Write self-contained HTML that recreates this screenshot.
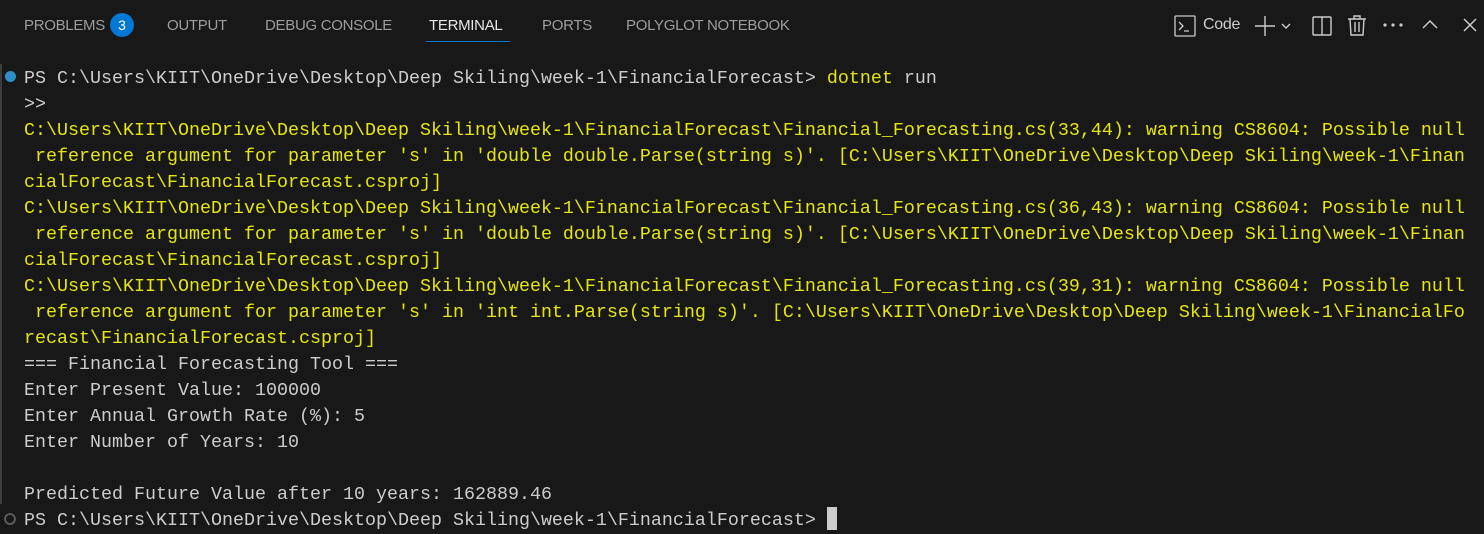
<!DOCTYPE html>
<html><head><style>
*{margin:0;padding:0;box-sizing:border-box}
body{width:1484px;height:534px;background:#181818;overflow:hidden;position:relative;font-family:"Liberation Sans",sans-serif}
.tabs{position:absolute;top:0;left:0;height:52px;width:100%}
.tab{position:absolute;top:17px;font-size:15px;color:#9d9d9d;letter-spacing:-0.3px}
.tab.act{color:#e7e7e7}
.badge{position:absolute;left:110px;top:13px;width:24px;height:24px;border-radius:12px;background:#0078d4;color:#fff;font-size:14px;text-align:center;line-height:24px}
.ul{position:absolute;left:426px;top:41px;width:84px;height:1px;background:#0078d4}
.term{position:absolute;left:24px;top:66px;font-family:"Liberation Mono",monospace;font-size:18.33px;line-height:26px;color:#cccccc;white-space:pre}
.y{color:#e5e510}
.bar{position:absolute;left:0;top:64px;width:2px;height:440px;background:#3c3c3c}
.dot1{position:absolute;left:5px;top:71px;width:11px;height:11px;border-radius:50%;background:#2f8fc9}
.dot2{position:absolute;left:4px;top:513px;width:12px;height:12px;border-radius:50%;border:2px solid #5a5a5a}
.cur{position:absolute;left:827px;top:507px;width:10px;height:23px;background:#cccccc}
svg{position:absolute}
</style></head><body>
<div class="tabs">
<div class="tab" style="left:24px">PROBLEMS</div><div class="badge">3</div>
<div class="tab" style="left:167px">OUTPUT</div>
<div class="tab" style="left:265px">DEBUG CONSOLE</div>
<div class="tab act" style="left:429px">TERMINAL</div>
<div class="ul"></div>
<div class="tab" style="left:542px">PORTS</div>
<div class="tab" style="left:626px">POLYGLOT NOTEBOOK</div>
<svg style="left:1174px;top:15px" width="22" height="22" viewBox="0 0 22 22" fill="none" stroke="#cccccc" stroke-width="1.3"><rect x="1" y="1" width="20" height="20" rx="1"/><path d="M5 7l4 4-4 4M10 16h5"/></svg>
<div class="tab act" style="left:1203px;color:#cccccc;font-size:16px;top:16px">Code</div>
<svg style="left:1254px;top:15px" width="42" height="22" viewBox="0 0 42 22" fill="none" stroke="#cccccc" stroke-width="1.4"><path d="M11 1v20M1 11h20M28 9l4 4 4-4"/></svg>
<svg style="left:1312px;top:15px" width="20" height="22" viewBox="0 0 20 22" fill="none" stroke="#cccccc" stroke-width="1.4"><rect x="1" y="2" width="18" height="18" rx="1"/><path d="M10 2v18"/></svg>
<svg style="left:1347px;top:14px" width="20" height="23" viewBox="0 0 20 23" fill="none" stroke="#cccccc" stroke-width="1.4"><path d="M1 5h18M7 5V2h6v3M3 5l1 16h12l1-16M8 8v10M12 8v10"/></svg>
<svg style="left:1382px;top:22px" width="22" height="6" viewBox="0 0 22 6" fill="#cccccc"><circle cx="3" cy="3" r="1.6"/><circle cx="11" cy="3" r="1.6"/><circle cx="19" cy="3" r="1.6"/></svg>
<svg style="left:1422px;top:18px" width="16" height="12" viewBox="0 0 16 12" fill="none" stroke="#cccccc" stroke-width="1.5"><path d="M1 10l7-7 7 7"/></svg>
<svg style="left:1463px;top:18px" width="14" height="14" viewBox="0 0 14 14" fill="none" stroke="#cccccc" stroke-width="1.5"><path d="M1 1l12 12M13 1L1 13"/></svg>
</div>
<div class="bar"></div><div class="dot1"></div><div class="dot2"></div>
<div class="term">PS C:\Users\KIIT\OneDrive\Desktop\Deep Skiling\week-1\FinancialForecast&gt; <span class="y">dotnet</span> run
&gt;&gt;
<span class="y">C:\Users\KIIT\OneDrive\Desktop\Deep Skiling\week-1\FinancialForecast\Financial_Forecasting.cs(33,44): warning CS8604: Possible null
 reference argument for parameter 's' in 'double double.Parse(string s)'. [C:\Users\KIIT\OneDrive\Desktop\Deep Skiling\week-1\Finan
cialForecast\FinancialForecast.csproj]
C:\Users\KIIT\OneDrive\Desktop\Deep Skiling\week-1\FinancialForecast\Financial_Forecasting.cs(36,43): warning CS8604: Possible null
 reference argument for parameter 's' in 'double double.Parse(string s)'. [C:\Users\KIIT\OneDrive\Desktop\Deep Skiling\week-1\Finan
cialForecast\FinancialForecast.csproj]
C:\Users\KIIT\OneDrive\Desktop\Deep Skiling\week-1\FinancialForecast\Financial_Forecasting.cs(39,31): warning CS8604: Possible null
 reference argument for parameter 's' in 'int int.Parse(string s)'. [C:\Users\KIIT\OneDrive\Desktop\Deep Skiling\week-1\FinancialFo
recast\FinancialForecast.csproj]</span>
=== Financial Forecasting Tool ===
Enter Present Value: 100000
Enter Annual Growth Rate (%): 5
Enter Number of Years: 10

Predicted Future Value after 10 years: 162889.46
PS C:\Users\KIIT\OneDrive\Desktop\Deep Skiling\week-1\FinancialForecast&gt; </div>
<div class="cur"></div>
</body></html>
